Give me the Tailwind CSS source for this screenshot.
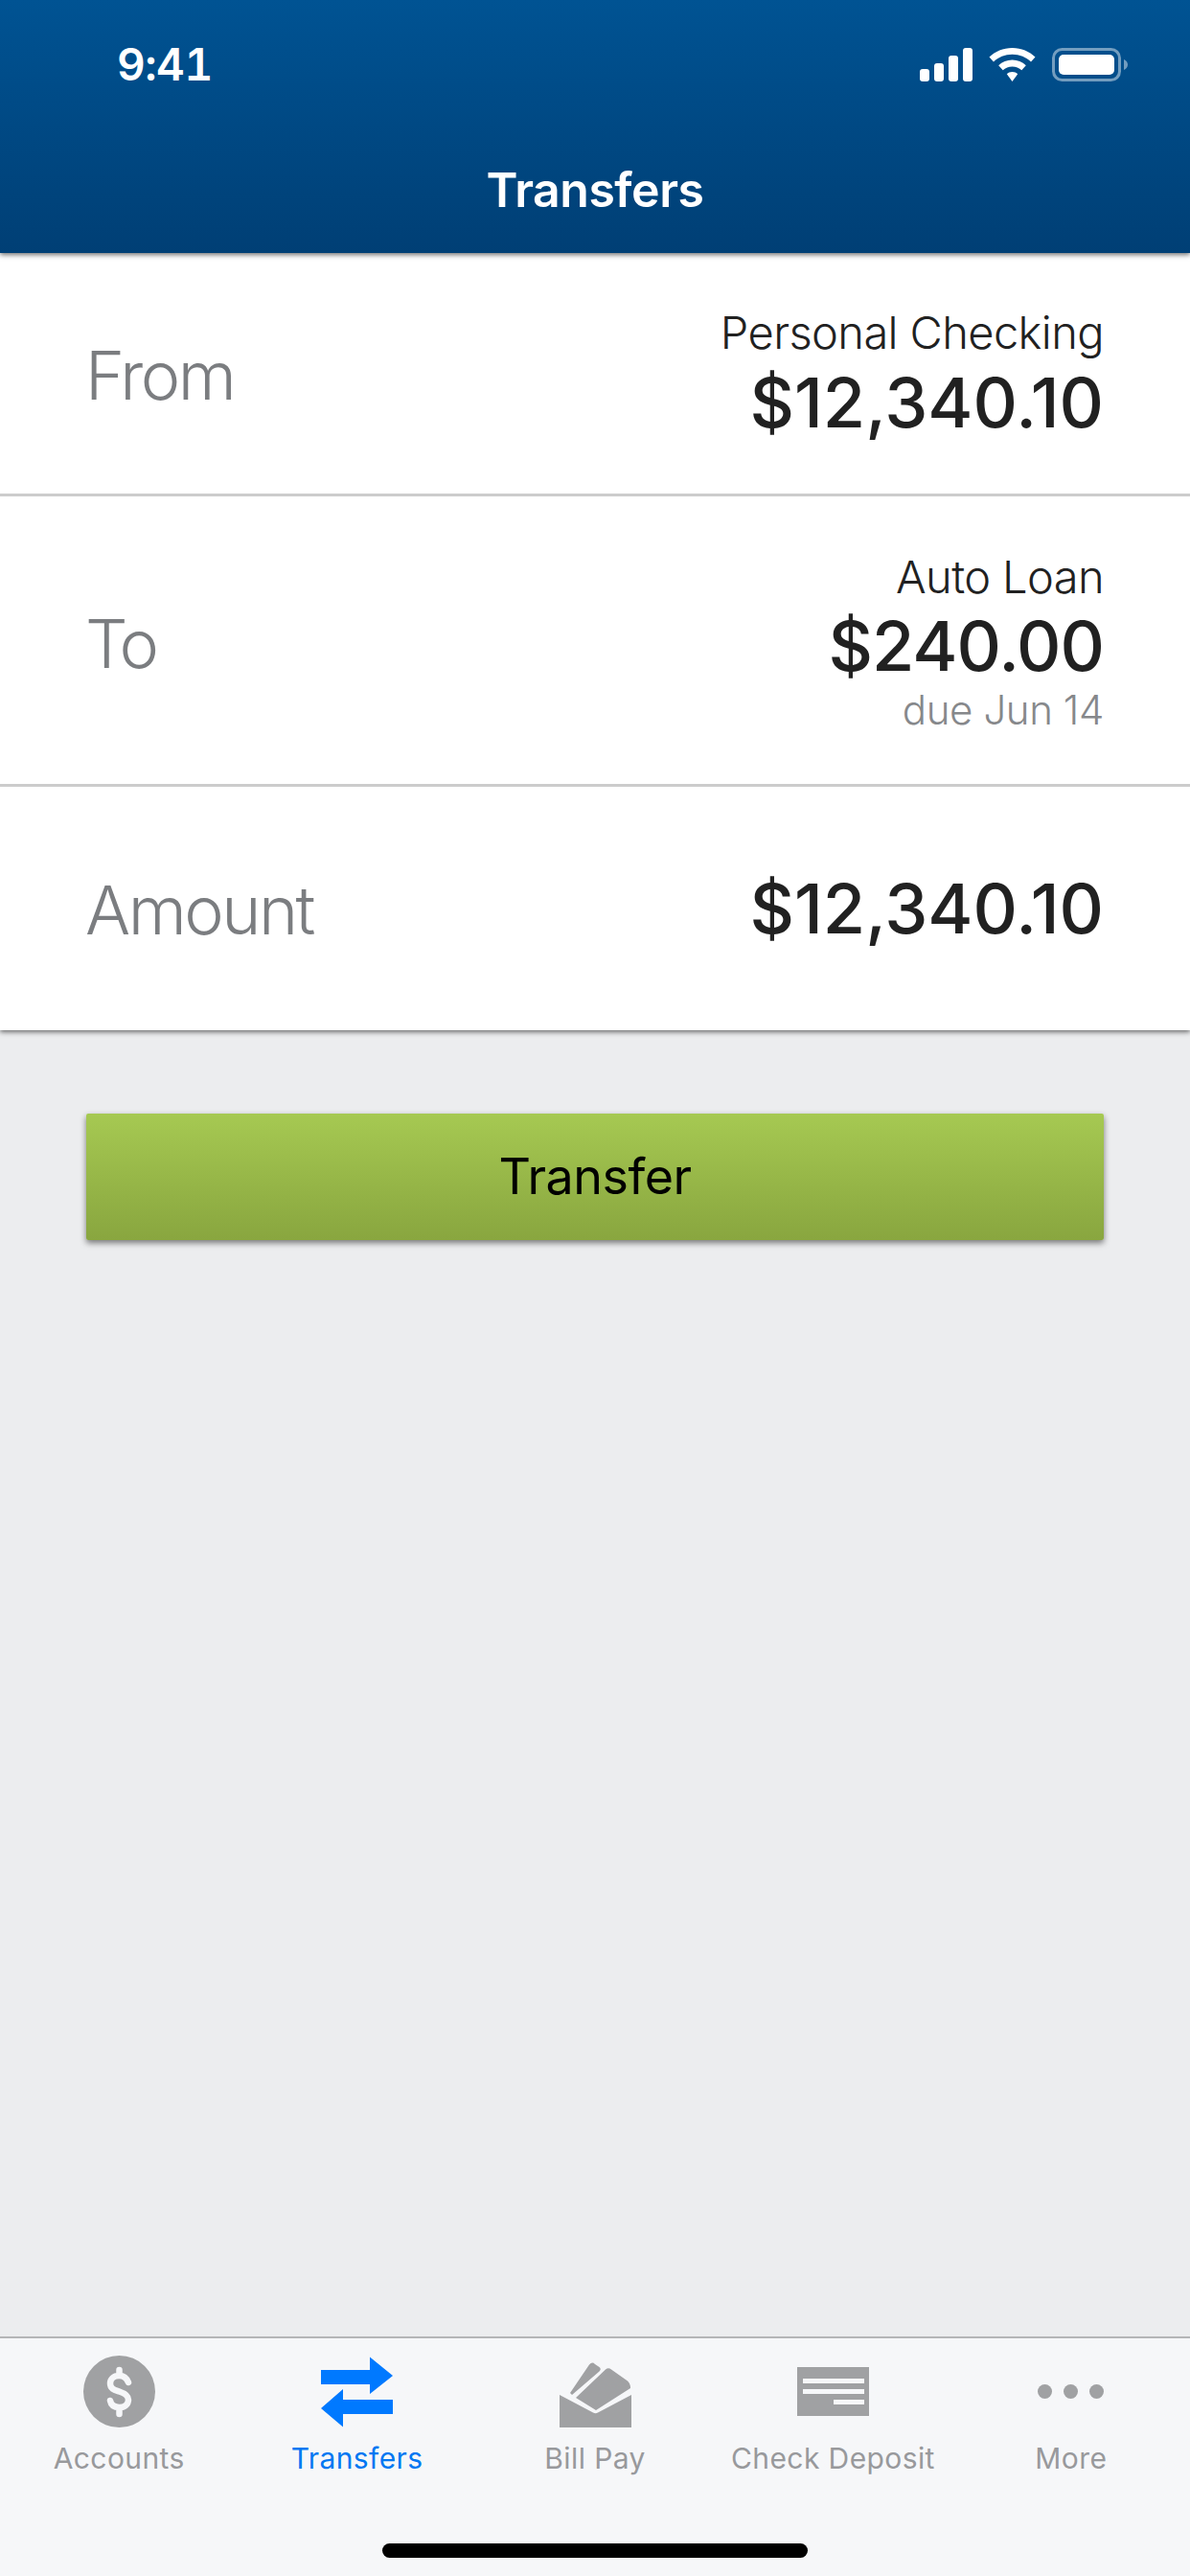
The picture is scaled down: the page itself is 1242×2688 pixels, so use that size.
<!DOCTYPE html>
<html>
  <head>
    <meta charset="UTF-8">
    <meta name="viewport" content="width=device-width, initial-scale=1.0">
    <title>Transfers</title>
    <script src="https://cdn.jsdelivr.net/npm/@tailwindcss/browser@4"></script>
  </head>
  <body class="w-[1242px] h-[2688px] flex flex-col overflow-hidden bg-[#ecedef] font-['Inter','Liberation_Sans',sans-serif]">
    <!-- status bar + title -->
    <header class="relative z-20 h-[264px] shrink-0 flex flex-col bg-gradient-to-b from-[#005393] to-[#003f75] shadow-[0_2px_5px_rgba(0,0,0,0.55)] text-white">
      <div class="flex justify-between items-center h-[35px] mt-[50px] pl-[122px] pr-[65px]">
        <span class="text-[46px] leading-[35px] font-semibold tracking-[-0.5px] tabular-nums">9:41</span>
        <div class="flex items-center gap-[17px]">
          <svg width="55" height="35" viewBox="0 0 55 35" fill="#fff">
            <rect x="0" y="22" width="10" height="13" rx="3"/>
            <rect x="15" y="16" width="10" height="19" rx="3"/>
            <rect x="30" y="8" width="10" height="27" rx="3"/>
            <rect x="45" y="0" width="10" height="35" rx="3"/>
          </svg>
          <svg width="49" height="35" viewBox="0 0 49 35" fill="#fff">
            <path d="M24.5 0C15 0 6.700 3.600 0.500 9.500L5 14.500C10 9.700 16.900 6.800 24.500 6.800S39 9.700 44 14.500L48.500 9.500C42.300 3.600 34 0 24.500 0Z"/>
            <path d="M24.500 12.500C19 12.500 14 14.700 10.200 18.300L14.700 23.300C17.300 20.900 20.700 19.400 24.500 19.400S31.700 20.900 34.300 23.300L38.800 18.300C35 14.700 30 12.500 24.500 12.500Z"/>
            <path d="M24.500 25C22.300 25 20.300 25.800 18.800 27.200L24.500 35L30.200 27.200C28.700 25.800 26.700 25 24.500 25Z"/>
          </svg>
          <svg width="79" height="35" viewBox="0 0 79 35" fill="none">
            <rect x="1.500" y="1.500" width="69" height="32" rx="9" stroke="#fff" stroke-opacity="0.45" stroke-width="3"/>
            <rect x="7" y="7" width="58" height="21" rx="5" fill="#fff"/>
            <path d="M75 12C77.500 13 79 15 79 17.500S77.500 22 75 23Z" fill="#fff" fill-opacity="0.45"/>
          </svg>
        </div>
      </div>
      <h1 class="mt-[88px] text-center text-[50px] leading-[50px] font-semibold tracking-[-0.5px]">Transfers</h1>
    </header>

    <main class="flex-1 flex flex-col">
      <section class="relative z-10 bg-white shadow-[0_2px_5px_rgba(0,0,0,0.55)]">
        <div class="h-[254px] flex justify-between items-center pl-[89px] pr-[90px] border-b-[3px] border-[#cccccc]">
          <span class="pt-[4px] text-[70px] leading-[80px] font-light text-[#7b7d80] tracking-[-2.5px]">From</span>
          <div class="flex flex-col items-end pt-[5px] text-[#212121]">
            <span class="text-[47px] leading-[56px] font-light tracking-[-0.6px]">Personal Checking</span>
            <span class="text-[72px] leading-[90px] font-medium tracking-[0px]">$12,340.10</span>
          </div>
        </div>
        <div class="h-[303px] flex justify-between items-center pl-[89px] pr-[90px] border-b-[3px] border-[#cccccc]">
          <span class="pt-[8px] text-[70px] leading-[80px] font-light text-[#7b7d80] tracking-[-3.5px]">To</span>
          <div class="flex flex-col items-end text-[#212121]">
            <span class="text-[47px] leading-[56px] font-light tracking-[-0.6px]">Auto Loan</span>
            <span class="text-[72px] leading-[88px] font-medium tracking-[-1px]">$240.00</span>
            <span class="text-[42px] leading-[45px] font-light text-[#86888b] tracking-[-0.4px]">due Jun 14</span>
          </div>
        </div>
        <div class="h-[254px] flex justify-between items-center pl-[89px] pr-[90px]">
          <span class="pt-[3px] text-[70px] leading-[80px] font-light text-[#7b7d80] tracking-[-2.5px]">Amount</span>
          <span class="text-[72px] leading-[90px] font-medium text-[#212121] tracking-[0px]">$12,340.10</span>
        </div>
      </section>

      <div class="px-[90px] pt-[87px]">
        <button class="w-full h-[132px] rounded-[2px] bg-gradient-to-b from-[#a6c952] to-[#89a63f] shadow-[0_3px_6px_rgba(0,0,0,0.5)] text-black text-[52px] tracking-[-0.5px]">Transfer</button>
      </div>
    </main>

    <!-- tab bar -->
    <nav class="h-[250px] shrink-0 flex flex-col bg-[#f6f7f9] border-t-2 border-[#b4b5b7]">
      <div class="flex pt-[18px] text-[30px] leading-[36px] tracking-[0.4px] text-[#98999c]">
        <div class="flex-1 flex flex-col items-center gap-[14px]">
          <svg width="75" height="75" viewBox="0 0 75 75">
            <circle cx="37.500" cy="37.500" r="37.500" fill="#a0a1a3"/>
            <path d="M47 28C45 23 41 21 37.500 21C31 21 28 25 28 29C28 35 33 36 37.500 37.500C42 39 47 41 47 46C47 51 43 54 37.500 54C33 54 29 52 28 47M37.500 15V21M37.500 54V61" fill="none" stroke="#f6f7f9" stroke-width="6.500" stroke-linecap="round"/>
          </svg>
          <span>Accounts</span>
        </div>
        <div class="flex-1 flex flex-col items-center gap-[14px] text-[#0077f2]">
          <svg width="75" height="75" viewBox="0 0 75 75" fill="#0079ff">
            <path d="M0 15H51V1.500L75 21L51 40V30H0Z"/>
            <path d="M75 46H23V35L0 55L23 74.500V61H75Z"/>
          </svg>
          <span>Transfers</span>
        </div>
        <div class="flex-1 flex flex-col items-center gap-[14px]">
          <svg width="75" height="75" viewBox="0 0 75 75" fill="#a0a1a3">
            <path d="M0 41L35 59.500Q37.500 61 40 59.500L75 41V75H0Z"/>
            <path d="M17 44L48 14.500Q51 12 54 14.500L71 26.500Q74 29 74 34L38 57Z"/>
            <path d="M11 39L31 9.500Q34 6 37 9L41.500 12Q44 14 41.500 16.500L13 41Z"/>
          </svg>
          <span>Bill Pay</span>
        </div>
        <div class="flex-1 flex flex-col items-center gap-[14px]">
          <div class="h-[75px] flex items-center">
            <svg width="75" height="51" viewBox="0 0 75 51">
              <rect width="75" height="51" fill="#a0a1a3"/>
              <rect x="6" y="12" width="64" height="5" fill="#f6f7f9"/>
              <rect x="6" y="23" width="64" height="5" fill="#f6f7f9"/>
              <rect x="38" y="34" width="32" height="5" fill="#f6f7f9"/>
            </svg>
          </div>
          <span>Check Deposit</span>
        </div>
        <div class="flex-1 flex flex-col items-center gap-[14px]">
          <div class="h-[75px] flex items-center gap-[12px]">
            <span class="w-[15px] h-[15px] rounded-full bg-[#a0a1a3]"></span>
            <span class="w-[15px] h-[15px] rounded-full bg-[#a0a1a3]"></span>
            <span class="w-[15px] h-[15px] rounded-full bg-[#a0a1a3]"></span>
          </div>
          <span>More</span>
        </div>
      </div>
      <div class="mt-[71px] mx-auto w-[444px] h-[15px] rounded-full bg-black"></div>
    </nav>
  </body>
</html>
